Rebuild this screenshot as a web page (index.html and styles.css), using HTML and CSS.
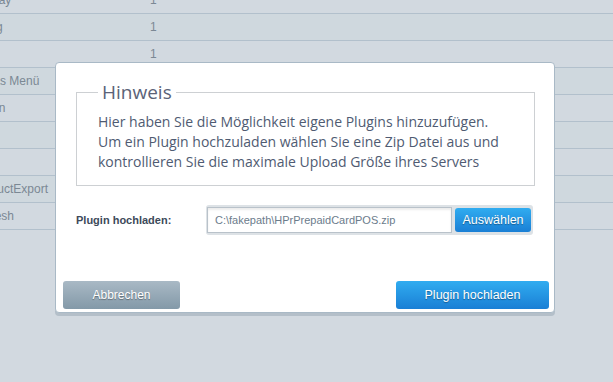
FILE: index.html
```html
<!DOCTYPE html>
<html lang="de">
<head>
  <meta charset="UTF-8">
  <title>Plugin hochladen</title>
  <link rel="stylesheet" href="styles.css">
</head>
<body>
  <div class="list">
    <div class="row"><span class="name">Display</span><span class="val">1</span></div>
    <div class="row alt"><span class="name">Beleg</span><span class="val">1</span></div>
    <div class="row"><span class="name"></span><span class="val">1</span></div>
    <div class="row alt"><span class="name">Extras Menü</span><span class="val"></span></div>
    <div class="row"><span class="name">Aktion</span><span class="val"></span></div>
    <div class="row alt"><span class="name"></span><span class="val"></span></div>
    <div class="row"><span class="name"></span><span class="val"></span></div>
    <div class="row alt"><span class="name">ProductExport</span><span class="val"></span></div>
    <div class="row"><span class="name">Refresh</span><span class="val"></span></div>
  </div>

  <div class="modal">
    <fieldset class="note">
      <legend>Hinweis</legend>
      <p>Hier haben Sie die Möglichkeit eigene Plugins hinzuzufügen.<br>
      Um ein Plugin hochzuladen wählen Sie eine Zip Datei aus und<br>
      kontrollieren Sie die maximale Upload Größe ihres Servers</p>
    </fieldset>

    <div class="upload">
      <label>Plugin hochladen:</label>
      <div class="file">
        <span class="path">C:\fakepath\HPrPrepaidCardPOS.zip</span>
        <button class="btn blue small">Auswählen</button>
      </div>
    </div>

    <div class="footer">
      <button class="btn grey">Abbrechen</button>
      <button class="btn blue wide">Plugin hochladen</button>
    </div>
  </div>
</body>
</html>
```

FILE: styles.css
```css
body { margin: 0; background: #d2d9e0; font-family: "Liberation Sans", Arial, sans-serif; overflow: hidden; }

.list { margin-top: -13px; margin-left: -28px; }
.row { display: flex; height: 26px; align-items: center; border-bottom: 1px solid #b2c0cc; font-size: 12px; color: #7b8894; }
.row.alt { background: #cfd8de; }
.name { width: 178px; white-space: nowrap; }

.modal { position: absolute; left: 55px; top: 62px; width: 498px; height: 249px; background: #fff; border: 1px solid #a9b9c6; border-radius: 4px; box-shadow: 0 3px 0 #b4bfc9; }

.note { margin: 16px 19px 0 20px; padding: 7px 20px 13px 21px; border: 1px solid #cdd0d3; }
.note legend { padding: 0 4px; font-family: "Open Sans", sans-serif; font-size: 19px; color: #5b6378; }
.note p { margin: 0; font-family: "Open Sans", sans-serif; font-size: 14px; line-height: 20px; color: #4f5b72; }

.upload { display: flex; align-items: center; margin: 19px 0 0 20px; }
.upload label { width: 130px; font-size: 11px; font-weight: bold; color: #3d4a5a; }
.file { display: flex; align-items: center; gap: 3px; padding: 2px 2px 2px 1px; background: #dde2e6; border-radius: 3px; }
.path { width: 236px; height: 24px; line-height: 24px; padding-left: 7px; background: #fff; border: 1px solid #b9c2ca; box-shadow: inset 0 2px 2px rgba(0,0,0,0.08); font-size: 11px; color: #6c7c8c; }

.btn { border: 0; border-radius: 3px; color: #fff; font-family: "Liberation Sans", Arial, sans-serif; font-size: 12px; text-shadow: 0 1px 1px rgba(0,0,0,0.35); }
.btn.blue { background: linear-gradient(#30acf0, #1a7fd5); }
.btn.grey { background: linear-gradient(#a9b9c5, #8399a8); width: 117px; }
.btn.small { width: 76px; height: 24px; font-size: 12.5px; }
.btn.wide { width: 153px; font-size: 12.5px; }

.footer { display: flex; justify-content: space-between; margin: 46px 5px 0 7px; }
.footer .btn { height: 28px; }
```
